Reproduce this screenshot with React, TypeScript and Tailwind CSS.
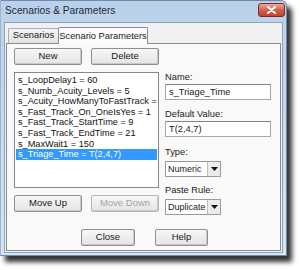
import React from 'react';

const items = [
  's_LoopDelay1 = 60',
  's_Numb_Acuity_Levels = 5',
  's_Acuity_HowManyToFastTrack = 2',
  's_Fast_Track_On_OneIsYes = 1',
  's_Fast_Track_StartTime = 9',
  's_Fast_Track_EndTime = 21',
  's_MaxWait1 = 150',
  's_Triage_Time = T(2,4,7)',
];

const font = { fontFamily: '"Liberation Sans", Arial, sans-serif' };

const Button: React.FC<{ label: string; w: string; disabled?: boolean }> = ({ label, w, disabled }) => (
  <div
    className={`${w} h-[17px] flex items-center justify-center text-[9.5px] rounded-[2px] border border-[#8e8f8f] bg-gradient-to-b from-[#f7f7f7] to-[#e4e4e4] shadow-[inset_-1px_-1px_0_#c9c9c9] ${
      disabled ? 'text-[#a3a3a3] border-[#b5b5b5]' : 'text-[#1a1a1a]'
    }`}
  >
    {label}
  </div>
);

const Select: React.FC<{ value: string; w: string }> = ({ value, w }) => (
  <div className={`${w} h-[16px] flex items-stretch border border-[#9a9a9a] bg-white text-[9px] text-[#1a1a1a]`}>
    <span className="flex-1 pl-[2px] leading-[14px] whitespace-nowrap overflow-hidden">{value}</span>
    <span className="w-[13px] flex items-center justify-center border-l border-[#c0c0c0] bg-[#ececec]">
      <svg width="7" height="4" viewBox="0 0 7 4">
        <path d="M0 0h7L3.5 4z" fill="#111" />
      </svg>
    </span>
  </div>
);

const Field: React.FC<{ value: string }> = ({ value }) => (
  <div className="w-[106px] h-[16px] border border-[#a4a7ad] border-t-[#7f8388] bg-white text-[9.3px] text-[#1a1a1a] pl-[3px] leading-[14px]">
    {value}
  </div>
);

export default function App() {
  return (
    <div className="w-[300px] h-[270px] bg-white" style={font}>
      <div className="w-[287px] h-[256px] flex flex-col bg-gradient-to-b from-[#b9d1ea] to-[#d6e4f3] border border-[#6f8aa8] border-l-[#9fb4cc] rounded-tr-[6px] shadow-[5px_6px_5px_rgba(0,0,0,0.8)]">
        <div className="h-[21px] flex items-start pl-[4px] pr-[1px]">
          <span className="mt-[3px] text-[10.2px] text-[#1c2a3a] leading-[14px]">Scenarios &amp; Parameters</span>
          <div className="ml-auto mt-[2px] w-[27px] h-[14px] rounded-[3px] border border-[#7a2b22] bg-gradient-to-b from-[#e9a99c] via-[#d1624f] to-[#c1432c] flex items-center justify-center">
            <svg width="9" height="8" viewBox="0 0 9 8">
              <path d="M1 1l7 6M8 1L1 7" stroke="#fff" strokeWidth="2" strokeLinecap="round" />
            </svg>
          </div>
        </div>
        <div className="flex-1 mx-[3px] mb-[2px] bg-[#f0f0f0] border border-[#8fa3bb] flex flex-col">
          <div className="h-[20px] flex items-end pl-[3px]">
            <div className="w-[50px] h-[15px] flex items-center justify-center border border-b-0 border-r-0 border-[#a9aeb6] rounded-tl-[2px] bg-gradient-to-b from-[#f4f4f4] to-[#e2e2e2] text-[9.3px] text-[#1a1a1a]">
              Scenarios
            </div>
            <div className="w-[90px] h-[17px] flex items-start justify-center pt-[2px] border border-b-0 border-[#898c95] rounded-t-[2px] bg-[#fbfbfb] text-[9.3px] text-[#1a1a1a] -mb-px relative whitespace-nowrap">
              Scenario Parameters
            </div>
          </div>
          <div className="flex-1 mx-[1px] mb-[1px] border border-[#898c95] bg-[#f9f9f9] flex flex-col">
            <div className="flex">
              <div className="ml-[7px] w-[145px] flex flex-col">
                <div className="mt-[4px] flex gap-[9px]">
                  <Button label="New" w="w-[68px]" />
                  <Button label="Delete" w="w-[68px]" />
                </div>
                <div className="mt-[7px] h-[116px] border border-[#828790] bg-white pt-[2px] px-[1px] overflow-hidden">
                  {items.map((t, i) => (
                    <div
                      key={t}
                      className={`h-[10.6px] leading-[10.6px] text-[9.2px] pl-[2px] whitespace-nowrap ${
                        i === items.length - 1 ? 'bg-[#3399ff] text-white' : 'text-[#111]'
                      }`}
                    >
                      {t}
                    </div>
                  ))}
                </div>
                <div className="mt-[7px] flex gap-[9px]">
                  <Button label="Move Up" w="w-[68px]" />
                  <Button label="Move Down" w="w-[68px]" disabled />
                </div>
              </div>
              <div className="ml-[6px] flex flex-col text-[9.3px] text-[#1a1a1a]">
                <span className="mt-[27px] leading-[12px]">Name:</span>
                <div className="mt-[1px]">
                  <Field value="s_Triage_Time" />
                </div>
                <span className="mt-[8px] leading-[12px]">Default Value:</span>
                <div className="mt-[1px]">
                  <Field value="T(2,4,7)" />
                </div>
                <span className="mt-[9px] leading-[12px]">Type:</span>
                <div className="mt-[3px]">
                  <Select value="Numeric" w="w-[56px]" />
                </div>
                <span className="mt-[7px] leading-[12px]">Paste Rule:</span>
                <div className="mt-[3px]">
                  <Select value="Duplicate" w="w-[56px]" />
                </div>
              </div>
            </div>
            <div className="mt-[14px] flex pl-[74px] gap-[20px]">
              <Button label="Close" w="w-[54px]" />
              <Button label="Help" w="w-[53px]" />
            </div>
          </div>
        </div>
      </div>
    </div>
  );
}
